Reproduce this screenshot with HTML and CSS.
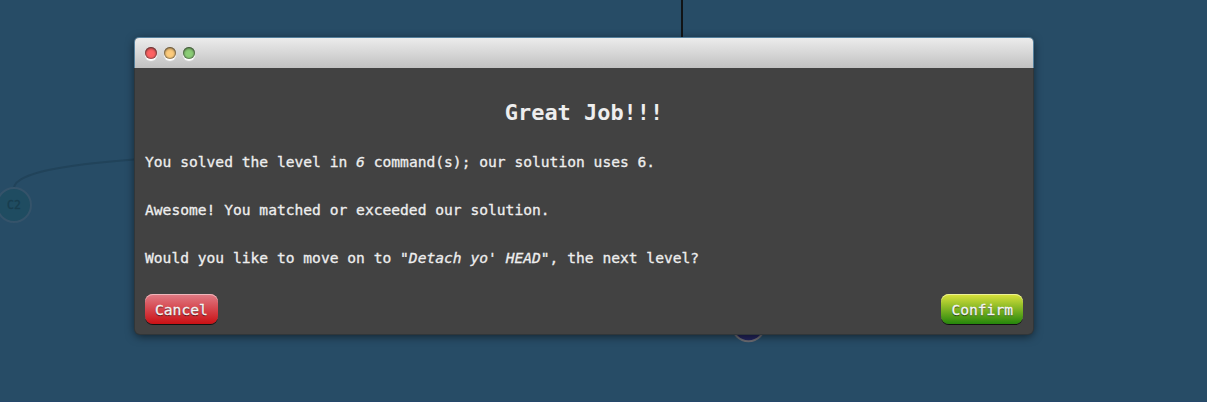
FILE: index.html
```html
<!DOCTYPE html>
<html lang="en">
<head>
<meta charset="utf-8">
<title>Great Job!!!</title>
<link rel="stylesheet" href="styles.css">
</head>
<body>
<svg class="tree" width="1207" height="402" viewBox="0 0 1207 402">
  <path class="edge" d="M14 187C18 173 60 165 140 159"/>
  <path class="trunk" d="M682 0V45"/>
  <circle class="commit" cx="14" cy="205" r="17"/>
  <text class="commit-label" x="14" y="209" text-anchor="middle">C2</text>
  <circle class="commit-dark" cx="748.5" cy="325" r="16.3"/>
</svg>
<main class="modal">
  <header class="titlebar">
    <span class="dot red"></span><span class="dot amber"></span><span class="dot green"></span>
  </header>
  <section class="content">
    <h2>Great Job!!!</h2>
    <p>You solved the level in <em>6</em> command(s); our solution uses 6.</p>
    <p>Awesome! You matched or exceeded our solution.</p>
    <p>Would you like to move on to <em>"Detach yo' HEAD"</em>, the next level?</p>
    <div class="actions">
      <button class="btn cancel">Cancel</button>
      <button class="btn confirm">Confirm</button>
    </div>
  </section>
</main>
</body>
</html>
```
FILE: styles.css
```css
* { box-sizing: border-box; }
body {
  margin: 0;
  height: 402px;
  padding: 38px 174px 0 135px;
  overflow: hidden;
  background: #274c66;
  border-bottom: 1px solid #25486b;
  font-family: Consolas, "DejaVu Sans Mono", monospace;
  font-size: 14.617px;
  color: #eee;
}
.tree { position: absolute; top: 0; left: 0; }
.edge { fill: none; stroke: #21435a; stroke-width: 2; }
.trunk { stroke: #111416; stroke-width: 2; }
.commit { fill: #1f4c61; stroke: #35536a; stroke-width: 2; }
.commit-label { font-size: 11.5px; fill: #183d4e; stroke: #183d4e; stroke-width: .3; }
.commit-dark { fill: #22245c; stroke: #6b6b72; stroke-width: 2; }
.modal {
  position: relative;
  width: 898px;
  height: 296px;
  border-radius: 5px;
  background: #424242;
  box-shadow: 0 0 0 1px #303639, 0 2px 10px rgba(0, 0, 0, .6);
}
.titlebar {
  display: flex;
  align-items: flex-start;
  gap: 7px;
  height: 30px;
  padding: 9px 10px;
  border-radius: 4px 4px 0 0;
  background: linear-gradient(#ececec, #c1c1c1);
  box-shadow: 0 0 0 1px #55809d;
  clip-path: inset(-1px -1px 0 -1px);
}
.dot {
  width: 12px;
  height: 12px;
  border-radius: 50%;
  box-shadow: inset 0 1px 3px rgba(0, 0, 0, .6), inset 0 0 1px 1px rgba(80, 80, 80, .45), 0 2px 1px #fff;
}
.red { background: #fd6263; }
.amber { background: #fccb7c; }
.green { background: #8bcd76; }
.content { padding: 31px 10px 0 10px; }
h2 {
  margin: 0;
  height: 28px;
  line-height: 28px;
  font-size: 21.93px;
  text-align: center;
}
p {
  margin: 0;
  height: 18px;
  line-height: 18px;
  white-space: pre;
  -webkit-text-stroke: .3px #eee;
}
h2 + p { margin-top: 26px; }
p + p { margin-top: 30px; }
.actions {
  display: flex;
  justify-content: space-between;
  margin-top: 27px;
}
.btn {
  height: 30px;
  padding: 2px 10px 0;
  border: 0;
  border-radius: 8px;
  font: inherit;
  line-height: 28px;
  color: #f5f5f5;
  -webkit-text-stroke: .3px #f5f5f5;
  text-shadow: 0 1px 1px rgba(0, 0, 0, .7);
}
.cancel {
  background: linear-gradient(#e07c86, #cb1014);
  box-shadow: inset 0 1px 0 #efb6ba, 0 1px 0 #111;
}
.confirm {
  background: linear-gradient(#dce33c, #25860b);
  box-shadow: inset 0 1px 0 #edf294, 0 1px 0 #111;
}
```
